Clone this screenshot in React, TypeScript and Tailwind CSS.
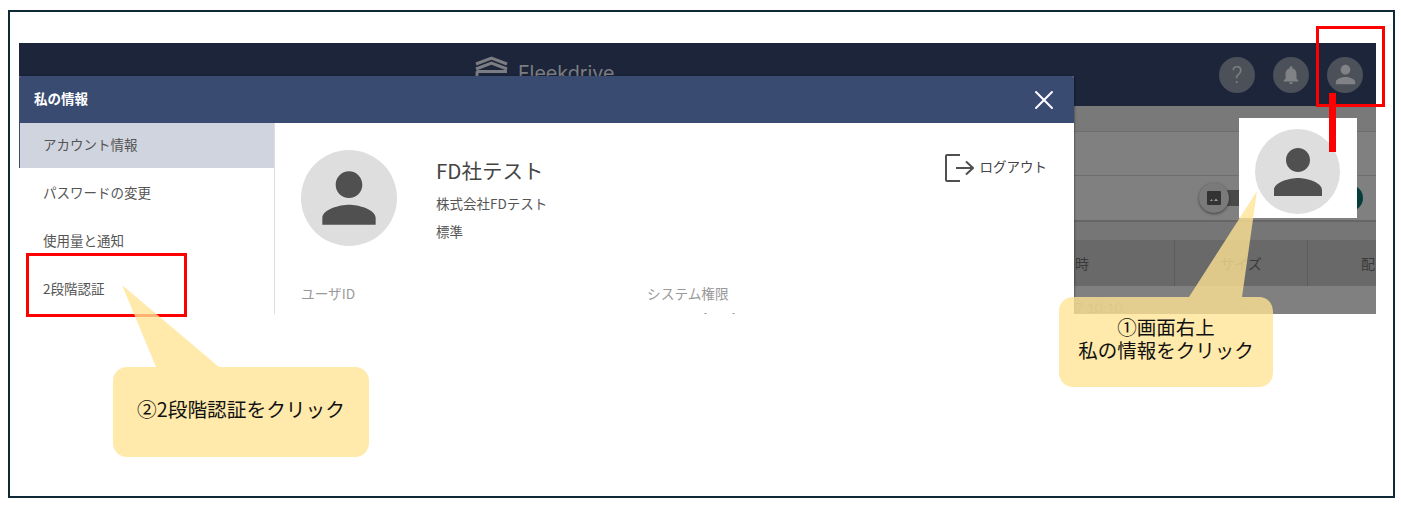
import { X } from "lucide-react";

const jp = "font-['Noto_Sans_CJK_JP','Noto_Sans',sans-serif]";

function Person({ className }: { className: string }) {
  return (
    <svg viewBox="0 0 24 24" className={className} fill="currentColor">
      <path d="M12 12c2.21 0 4-1.79 4-4s-1.79-4-4-4-4 1.79-4 4 1.79 4 4 4zm0 2c-2.67 0-8 1.34-8 4v2h16v-2c0-2.66-5.33-4-8-4z" />
    </svg>
  );
}

function Bell({ className }: { className: string }) {
  return (
    <svg viewBox="0 0 24 24" className={className} fill="currentColor">
      <path d="M12 22c1.1 0 2-.9 2-2h-4c0 1.1.9 2 2 2zm6-6v-5c0-3.07-1.63-5.64-4.5-6.32V4c0-.83-.67-1.5-1.5-1.5s-1.5.67-1.5 1.5v.68C7.64 5.36 6 7.92 6 11v5l-2 2v1h16v-1l-2-2z" />
    </svg>
  );
}

function Logo() {
  return (
    <svg viewBox="0 0 33 32" className="h-8 w-[33px] text-[#7b7d82]" fill="none" stroke="currentColor" strokeWidth="3">
      <path d="M1 10l15.5-6 15.5 6" />
      <path d="M1 15l15.5-6 15.5 6" />
      <path d="M2 32V19q0-1.500 1.500-1.500H32" />
    </svg>
  );
}

function HeaderButton({ children }: { children: React.ReactNode }) {
  return (
    <div className="flex h-9 w-9 items-center justify-center rounded-full bg-[#4b5059] text-[#808285]">
      {children}
    </div>
  );
}

function Modal() {
  const item = "flex items-center pl-6 text-[13.5px] text-[#555]";
  return (
    <div className="absolute left-0 top-[33px] bottom-0 flex w-[1055px] flex-col overflow-hidden rounded-t-[2px] bg-white shadow-[1px_0_2px_rgba(0,0,0,0.3)]">
      <div className="flex h-[47px] shrink-0 items-center justify-between bg-[#3a4b72] pl-[15px] pr-[14px]">
        <span className="pb-[2px] text-[13.5px] font-bold text-white">私の情報</span>
        <X className="h-8 w-8 text-white" strokeWidth={1.5} />
      </div>
      <div className="flex min-h-0 flex-1">
        <div className="w-[256px] shrink-0 border-r border-[#ddd]">
          <div className={`${item} h-[45px] border-l border-[#3a4b72] bg-[#d0d4de] pb-[2px] !pl-[23px]`}>アカウント情報</div>
          <div className={`${item} h-[49px]`}>パスワードの変更</div>
          <div className={`${item} h-[47px]`}>使用量と通知</div>
          <div className={`${item} h-[48px]`}>2段階認証</div>
        </div>
        <div className="relative flex-1 pl-[26px] pt-[27px]">
          <div className="flex">
            <div className="flex h-24 w-24 items-center justify-center rounded-full bg-[#dedede] text-[#505050]">
              <Person className="h-20 w-20" />
            </div>
            <div className="ml-[39px] flex flex-col pt-[3px]">
              <span className="text-[20.5px] leading-[34px] text-[#444]">FD社テスト</span>
              <span className="mt-[4px] text-[13.5px] leading-[24px] text-[#555]">株式会社FDテスト</span>
              <span className="mt-[4px] text-[13.5px] leading-[24px] text-[#555]">標準</span>
            </div>
            <div className="ml-auto mr-[27px] mt-[3px] flex h-[30px] items-center gap-[6px] text-[13.5px] text-[#444]">
              <svg viewBox="0 0 30 30" className="h-[30px] w-[30px]" fill="none" stroke="#505050" strokeWidth="2">
                <path d="M16 2H3a1 1 0 0 0-1 1v24a1 1 0 0 0 1 1h13" />
                <path d="M12 15h17M22 8.500l7 6.500-7 6.500" />
              </svg>
              <span className="pb-[4px]">ログアウト</span>
            </div>
          </div>
          <div className="mt-[37px] flex text-[13.7px] leading-[20px] text-[#999]">
            <div className="w-[346px]">ユーザID</div>
            <div>システム権限</div>
          </div>
          <div className="ml-[398px] mt-[1px] flex gap-[15px] text-[13px] leading-[20px] text-[#999]">
            <span>・</span>
            <span>・</span>
          </div>
        </div>
      </div>
    </div>
  );
}

function Backdrop() {
  return (
    <div className="flex h-[208px] flex-col bg-[#808080] text-[14px]">
      <div className="h-[26px] shrink-0 border-b border-[#6e6e6e] bg-[#797979]" />
      <div className="h-[44px] shrink-0 border-b border-[#6e6e6e]" />
      <div className="flex h-[46px] shrink-0 items-center justify-end border-b-2 border-[#666] pr-[13px]">
        <div className="relative flex h-[30px] w-[164px] items-center">
          <div className="absolute left-[14px] top-[7px] h-[16px] w-[40px] bg-[#4a4a4a]" />
          <div className="relative flex h-[30px] w-[30px] items-center justify-center rounded-full bg-[#7a7a7a] shadow-[0_1px_3px_rgba(0,0,0,0.5)]">
            <svg viewBox="0 0 14 14" className="h-[14px] w-[14px]">
              <rect width="14" height="14" rx="1" fill="#333" />
              <path d="M3 10l1.500-2 1.500 2zM7 10l2-2.500 2 2.500z" fill="#999" />
            </svg>
          </div>
          <div className="ml-auto h-[26px] w-[26px] rounded-full bg-[#063c3a]" />
        </div>
      </div>
      <div className="h-[18px] shrink-0 bg-[#767676]" />
      <div className="flex h-[46px] shrink-0 items-center bg-[#696969] text-[#3a3a3a]">
        <div className="flex h-full w-[1156px] items-center justify-end border-r border-[#5c5c5c] pr-[85px]">時</div>
        <div className="flex h-full w-[133px] items-center justify-center border-r border-[#5c5c5c]">サイズ</div>
        <div className="flex-1 pl-[53px]">配</div>
      </div>
      <div className="flex h-[28px] shrink-0 items-start overflow-hidden pl-[1056px] pt-[12px] font-['Lato',sans-serif] text-[14px] leading-[20px] text-[#666]">
        <span>7 10:10</span>
        <span className="ml-[120px]">-</span>
      </div>
    </div>
  );
}

function Screen() {
  return (
    <div className={`relative ml-[9px] mt-[31px] h-[271px] w-[1357px] overflow-hidden ${jp}`}>
      <div className="flex h-[63px] items-center justify-between bg-[#1c2539] pl-[456px] pr-[13px]">
        <div className="flex items-start pb-[6px]">
          <Logo />
          <span className="ml-[10px] mt-[3px] font-['Inter',sans-serif] text-[19.7px] leading-8 text-[#7b7d82]">Fleekdrive</span>
        </div>
        <div className="flex gap-[18px]">
          <HeaderButton>
            <span className="font-['Roboto',sans-serif] text-[24px] font-light leading-none">?</span>
          </HeaderButton>
          <HeaderButton>
            <Bell className="h-[22px] w-[22px]" />
          </HeaderButton>
          <HeaderButton>
            <Person className="h-[29px] w-[29px]" />
          </HeaderButton>
        </div>
      </div>
      <Backdrop />
      <Modal />
    </div>
  );
}

function Callouts() {
  return (
    <div className={jp}>
      <div className="absolute left-[1239px] top-[118px] h-[100px] w-[118px] bg-white pl-4 pt-[11px]">
        <div className="flex h-[85px] w-[85px] items-center justify-center rounded-full bg-[#dedede] text-[#505050]">
          <Person className="h-[72px] w-[72px]" />
        </div>
      </div>

      <div className="absolute left-[26px] top-[253px] h-[64px] w-[161px] border-[3px] border-[#ff0000]" />
      <div className="absolute left-[1316px] top-[26px] h-[81px] w-[69px] border-[3px] border-[#ff0000]" />
      <div className="absolute left-[1329px] top-[93px] h-[59px] w-[7px] bg-[#ff0000]" />

      {/* speech bubble tails */}
      <svg className="absolute left-0 top-0 h-[510px] w-[1401px]" viewBox="0 0 1401 510">
        <polygon points="1189,297 1257,191 1242,297" fill="#ffe493" fillOpacity="0.78" />
        <polygon points="156,367 122,285 219,367" fill="#ffe493" fillOpacity="0.78" />
      </svg>

      <div className="absolute left-[1059px] top-[297px] flex h-[90px] w-[214px] items-center justify-center rounded-[14px] bg-[#ffe493]/78 pb-[8px] text-center text-[19.5px] leading-[23px] text-[#111]">
        <span>
          ①画面右上
          <br />
          私の情報をクリック
        </span>
      </div>
      <div className="absolute left-[113px] top-[367px] flex h-[90px] w-[256px] items-center justify-center rounded-[14px] bg-[#ffe493]/78 pb-[6px] text-[19.7px] text-[#111]">
        ②2段階認証をクリック
      </div>
    </div>
  );
}

export default function App() {
  return (
    <div className="relative h-[510px] w-[1401px] overflow-hidden bg-white pl-2 pt-[10px]">
      <div className="h-[488px] w-[1387px] border-2 border-[#0f2a36]">
        <Screen />
      </div>
      <Callouts />
    </div>
  );
}
